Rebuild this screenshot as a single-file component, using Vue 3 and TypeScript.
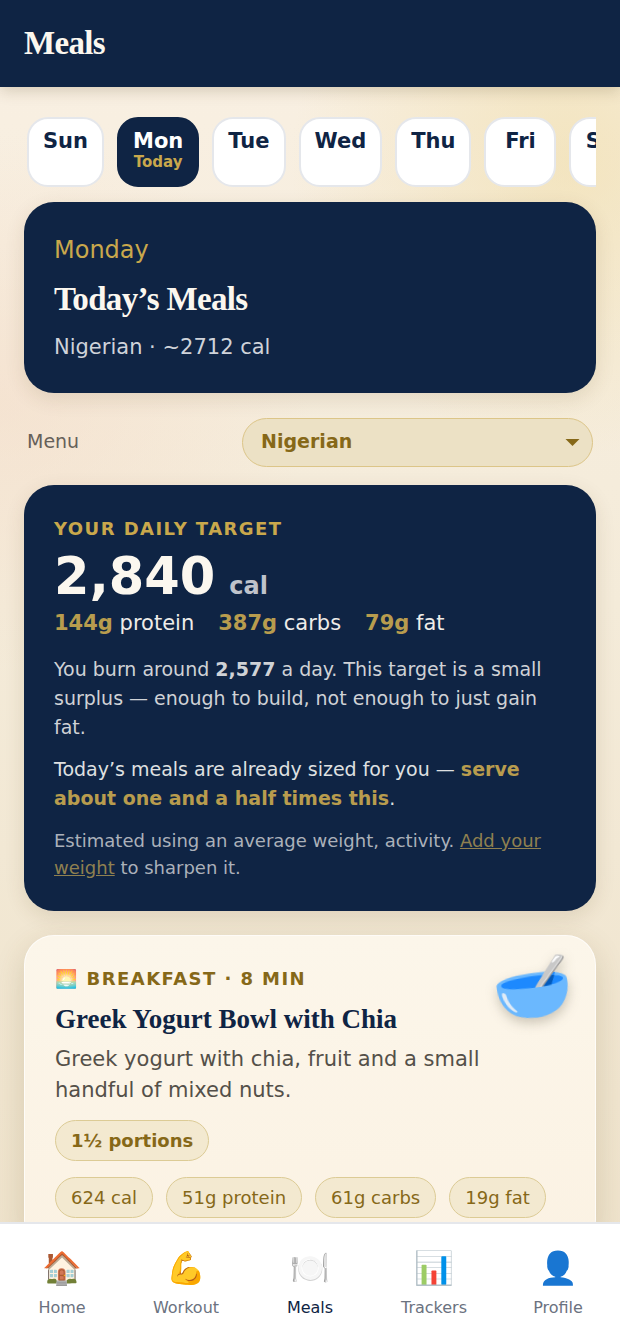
<script setup lang="ts">
import { ref } from 'vue'

interface Day { name: string; today?: boolean }
interface Tab { label: string; icon: string }

const days: Day[] = [
  { name: 'Sun' }, { name: 'Mon', today: true }, { name: 'Tue' }, { name: 'Wed' },
  { name: 'Thu' }, { name: 'Fri' }, { name: 'Sat' },
]
const activeDay = ref('Mon')
const menus = ['Nigerian']
const menu = ref('Nigerian')
const targets = [
  { amount: '144g', label: 'protein' },
  { amount: '387g', label: 'carbs' },
  { amount: '79g', label: 'fat' },
]
const nutrition = ['624 cal', '51g protein', '61g carbs', '19g fat']
const tabs: Tab[] = [
  { label: 'Home', icon: '🏠' },
  { label: 'Workout', icon: '💪' },
  { label: 'Meals', icon: '🍽️' },
  { label: 'Trackers', icon: '📊' },
  { label: 'Profile', icon: '👤' },
]
const activeTab = ref('Meals')
</script>

<template>
  <div class="app">
    <header class="topbar"><h1>Meals</h1></header>

    <main class="content">
      <div class="days">
        <button
          v-for="day in days"
          :key="day.name"
          type="button"
          class="day"
          :class="{ active: day.name === activeDay }"
          @click="activeDay = day.name"
        >
          <span>{{ day.name }}</span>
          <small v-if="day.today">Today</small>
        </button>
      </div>

      <section class="card hero">
        <p class="hero-day">Monday</p>
        <h2>Today’s Meals</h2>
        <p class="hero-sub">Nigerian · ~2712 cal</p>
      </section>

      <div class="menu-row">
        <label for="menu">Menu</label>
        <div class="select-wrap">
          <select id="menu" v-model="menu">
            <option v-for="m in menus" :key="m">{{ m }}</option>
          </select>
          <svg class="caret" viewBox="0 0 14 7" aria-hidden="true"><path d="M0 0h14L7 7z" /></svg>
        </div>
      </div>

      <section class="card target">
        <h3 class="eyebrow">YOUR DAILY TARGET</h3>
        <p class="total">2,840 <span>cal</span></p>
        <ul class="macros">
          <li v-for="t in targets" :key="t.label"><b>{{ t.amount }}</b> {{ t.label }}</li>
        </ul>
        <p class="body soft">
          You burn around <b>2,577</b> a day. This target is a small surplus — enough to build, not
          enough to just gain fat.
        </p>
        <p class="body">
          Today’s meals are already sized for you — <b class="gold">serve about one and a half times this</b>.
        </p>
        <p class="note">
          Estimated using an average weight, activity. <a href="#profile">Add your weight</a> to sharpen it.
        </p>
      </section>

      <article class="meal">
        <span class="bowl" aria-hidden="true">🥣</span>
        <p class="eyebrow dark"><span aria-hidden="true">🌅</span> BREAKFAST · 8 MIN</p>
        <h3>Greek Yogurt Bowl with Chia</h3>
        <p class="desc">Greek yogurt with chia, fruit and a small handful of mixed nuts.</p>
        <div class="pills"><span class="pill strong">1½ portions</span></div>
        <div class="pills"><span v-for="n in nutrition" :key="n" class="pill">{{ n }}</span></div>
      </article>
    </main>

    <nav class="tabs">
      <button
        v-for="tab in tabs"
        :key="tab.label"
        type="button"
        class="tab"
        :class="{ active: tab.label === activeTab }"
        @click="activeTab = tab.label"
      >
        <span class="tab-icon" aria-hidden="true">{{ tab.icon }}</span>
        <span>{{ tab.label }}</span>
      </button>
    </nav>
  </div>
</template>

<style>
body { margin: 0; }
</style>

<style scoped>
* { box-sizing: border-box; }
h1, h2, h3, p, ul { margin: 0; padding: 0; }
button, select { font: inherit; }

.app {
  height: 100vh;
  display: flex;
  flex-direction: column;
  font-family: "DejaVu Sans", "Noto Color Emoji", sans-serif;
  color: #0f2444;
  background:
    radial-gradient(ellipse 45% 22% at 92% 12%, rgba(238, 218, 158, 0.5), transparent),
    radial-gradient(ellipse 50% 20% at 0% 30%, rgba(244, 216, 196, 0.45), transparent),
    linear-gradient(#f9f0e3, #f4ebd9 45%, #eee2ca);
}

.topbar {
  flex: none;
  position: relative;
  z-index: 1;
  padding: 24px;
  background: #0f2444;
  box-shadow: 0 4px 14px rgba(80, 60, 20, 0.2);
}
.topbar h1, .hero h2 {
  font: bold 33px/39px "Liberation Serif", serif;
  letter-spacing: -0.02em;
  color: #fbf7ef;
}

.content {
  flex: 1;
  min-height: 0;
  overflow-y: auto;
  scrollbar-width: none;
  padding: 26px 24px 24px;
}

.days {
  display: flex;
  gap: 13px;
  padding: 4px 3px;
  margin-bottom: 11px;
  overflow-x: auto;
  scrollbar-width: none;
}
.day {
  flex: none;
  display: flex;
  flex-direction: column;
  align-items: center;
  justify-content: flex-start;
  min-width: 72px;
  padding: 10px 14px 14px;
  border: 2px solid #e5e7eb;
  border-radius: 21px;
  background: #fff;
  color: #0f2444;
  font-size: 21px;
  font-weight: bold;
  line-height: 24px;
}
.day small { font-size: 15px; line-height: 18px; color: #c9a84c; }
.day.active { background: #0f2444; border-color: #0f2444; color: #fff; }

.card {
  padding: 30px;
  border-radius: 30px;
  background: #0f2444;
  color: #fbf7ef;
  box-shadow: 0 6px 20px rgba(80, 60, 20, 0.12);
}
.hero-day { font-size: 24px; line-height: 36px; color: #c9a84c; }
.hero h2 { margin: 12px 0; }
.hero-sub { font-size: 21px; line-height: 32px; color: #cfd3da; }

.menu-row {
  display: flex;
  align-items: center;
  justify-content: space-between;
  padding: 25px 3px 18px;
}
.menu-row label { padding-bottom: 3px; font-size: 19px; color: #666059; }
.select-wrap { position: relative; width: 62%; }
.select-wrap select {
  display: block;
  width: 100%;
  height: 49px;
  padding: 0 40px 3px 18px;
  border: 1px solid #dcc588;
  border-radius: 25px;
  appearance: none;
  background: #ece1c5;
  color: #866818;
  font-size: 19px;
  font-weight: bold;
}
.caret {
  position: absolute;
  right: 13px;
  top: 21px;
  width: 15px;
  height: 7px;
  fill: #866818;
  pointer-events: none;
}

.eyebrow {
  font-size: 18px;
  font-weight: bold;
  line-height: 27px;
  letter-spacing: 0.08em;
  color: #c9a84c;
}
.total {
  display: flex;
  align-items: baseline;
  gap: 14px;
  margin-top: 10px;
  font-size: 51px;
  font-weight: bold;
  line-height: 49px;
}
.total span { font-size: 24px; color: #bfc3cb; }
.macros {
  display: flex;
  gap: 24px;
  list-style: none;
  font-size: 21px;
  line-height: 24px;
  color: #eeece9;
}
.macros b, .gold { color: #b89c4e; }
.body { margin-top: 13px; font-size: 19px; line-height: 29px; color: #dfe0e1; }
.body.soft { margin-top: 20px; color: #cfd2d6; }
.note { margin-top: 14px; font-size: 18px; line-height: 27px; color: #abb1ba; }
.note a { color: #8f8050; }

.meal {
  position: relative;
  margin-top: 24px;
  padding: 30px;
  border: 1px solid rgba(255, 255, 255, 0.7);
  border-radius: 30px;
  background: linear-gradient(#fcf6ea, #fbf2e3);
  box-shadow: 0 10px 30px rgba(100, 75, 30, 0.18);
}
.dark { line-height: 25px; color: #866818; }
.bowl {
  position: absolute;
  right: 22px;
  top: 13px;
  font-size: 65px;
  line-height: 78px;
  transform: rotate(-8deg);
  filter: drop-shadow(0 5px 6px rgba(60, 50, 30, 0.25));
}
.meal h3 {
  margin-top: 12px;
  font: bold 27px/32px "Liberation Serif", serif;
}
.desc { margin-top: 9px; padding-right: 60px; font-size: 21px; line-height: 31px; color: #545049; }
.pills { display: flex; flex-wrap: wrap; gap: 13px; margin-top: 14px; }
.pills + .pills { margin-top: 16px; }
.pill {
  padding: 6px 15px;
  border: 1px solid #dccb95;
  border-radius: 21px;
  background: #f3e9d0;
  color: #866818;
  font-size: 18px;
  line-height: 27px;
}
.strong { font-weight: bold; }

.tabs {
  flex: none;
  position: relative;
  display: flex;
  padding: 23px 0 22px;
  border-top: 2px solid #e5e7eb;
  background: #fff;
}
.tab {
  flex: 1;
  display: flex;
  flex-direction: column;
  align-items: center;
  gap: 7px;
  padding: 0;
  border: 0;
  background: none;
  color: #6b7280;
  font-size: 16px;
  line-height: 24px;
}
.tab.active { color: #0f2444; }
.tab-icon { font-size: 32px; line-height: 42px; }
</style>
